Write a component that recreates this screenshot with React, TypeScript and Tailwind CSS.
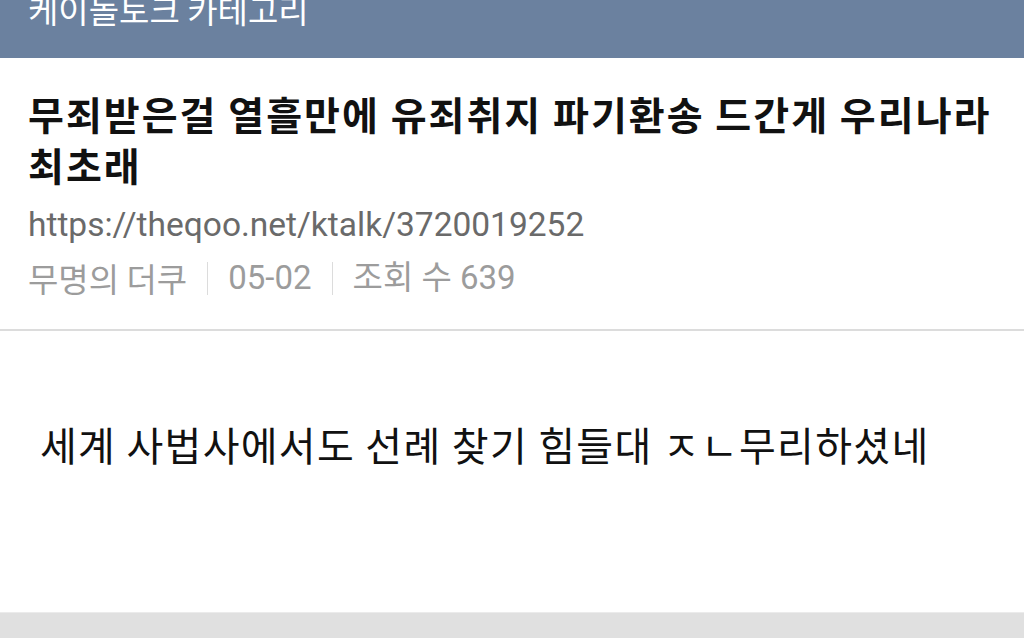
const sans = "font-['Roboto','Noto_Sans_CJK_KR',sans-serif]";

const MetaSep = () => <span className="mx-[20px] inline-block h-[33px] w-px bg-[#dcdcdc]" />;

export default function App() {
  return (
    <div className={`flex h-[638px] w-[1024px] flex-col overflow-hidden bg-white ${sans}`}>
      <header className="h-[58px] shrink-0 overflow-hidden bg-[#6b819f] px-[28px]">
        <div className="mt-[-13px] font-['Noto_Sans_CJK_KR',sans-serif] text-[33px] leading-[44px] text-white">
          케이돌토크 카테고리
        </div>
      </header>

      <section className="shrink-0 border-b-2 border-[#dcdcdc] px-[28px] pt-[30px] pb-[31px]">
        <h1 className="break-keep font-['Noto_Sans_CJK_KR',sans-serif] text-[39px] leading-[51px] font-bold tracking-[2px] text-[#111]">
          무죄받은걸 열흘만에 유죄취지 파기환송 드간게 우리나라 최초래
        </h1>
        <div className="mt-[15px] text-[33.5px] leading-[40px] text-[#6a6a6a]">
          https://theqoo.net/ktalk/3720019252
        </div>
        <div className="mt-[13px] flex items-center text-[33px] leading-[40px] text-[#9c9c9c]">
          <span className="font-['Noto_Sans_CJK_KR',sans-serif]">무명의 더쿠</span>
          <MetaSep />
          <span>05-02</span>
          <MetaSep />
          <span>조회 수 639</span>
        </div>
      </section>

      <main className="flex-1 px-[40px] pt-[87px]">
        <p className="font-['Noto_Sans_CJK_KR',sans-serif] text-[40px] leading-[52px] tracking-[1.3px] text-[#111]">
          세계 사법사에서도 선례 찾기 힘들대 ㅈㄴ무리하셨네
        </p>
      </main>

      <footer className="h-[26px] shrink-0 border-t border-[#ebebeb] bg-[#e0e0e0]" />
    </div>
  );
}
